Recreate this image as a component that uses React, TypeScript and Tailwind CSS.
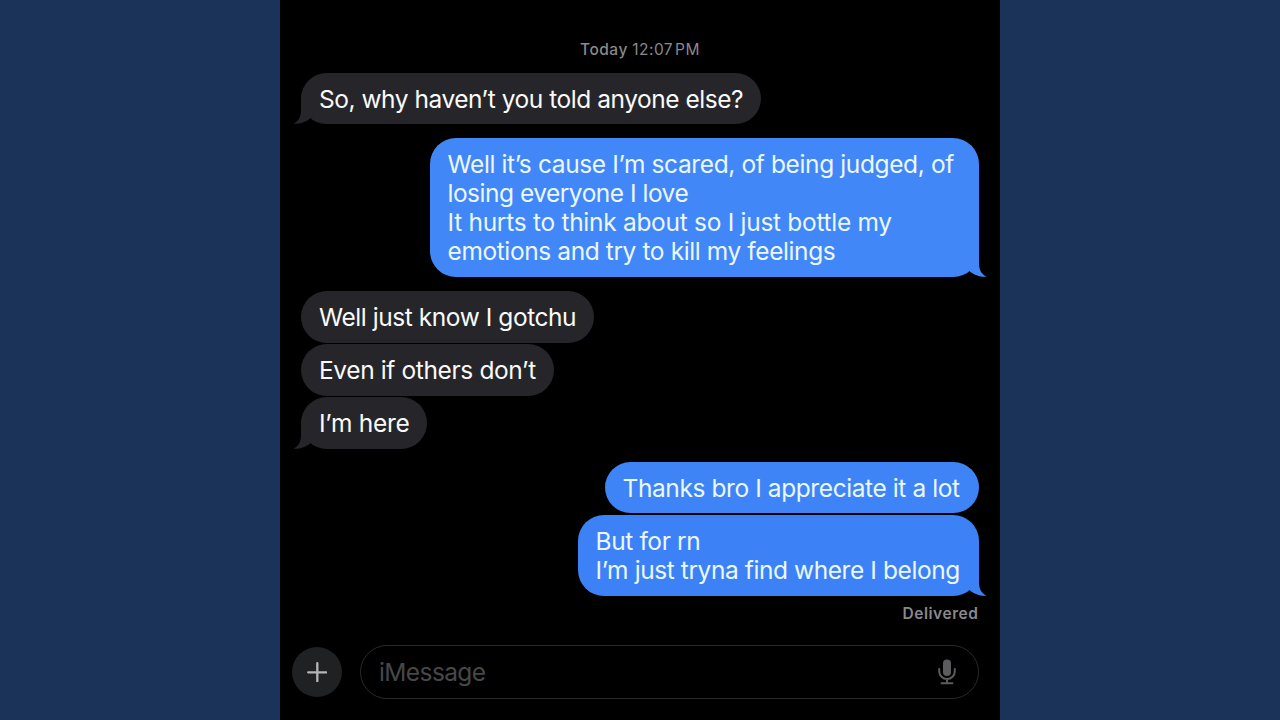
import React from "react";

type Message = {
  id: number;
  lines: { text: string; tracking: string }[];
  fromMe: boolean;
  hasTail: boolean;
  className: string;
};

const messages: Message[] = [
  {
    id: 1,
    lines: [
      {
        text: "So, why haven’t you told anyone else?",
        tracking: "tracking-[-0.47px]",
      },
    ],
    fromMe: false,
    hasTail: true,
    className: "w-[460px] bg-[#26262a]",
  },
  {
    id: 2,
    lines: [
      {
        text: "Well it’s cause I’m scared, of being judged, of",
        tracking: "tracking-[-0.38px]",
      },
      { text: "losing everyone I love", tracking: "tracking-[-0.5px]" },
      {
        text: "It hurts to think about so I just bottle my",
        tracking: "tracking-[-0.29px]",
      },
      {
        text: "emotions and try to kill my feelings",
        tracking: "tracking-[-0.4px]",
      },
    ],
    fromMe: true,
    hasTail: true,
    className: "mt-[13.5px] w-[549px] bg-[#4287f7]",
  },
  {
    id: 3,
    lines: [
      { text: "Well just know I gotchu", tracking: "tracking-[-0.44px]" },
    ],
    fromMe: false,
    hasTail: false,
    className: "mt-[14.3px] w-[293px] bg-[#26262a]",
  },
  {
    id: 4,
    lines: [{ text: "Even if others don’t", tracking: "tracking-[-0.38px]" }],
    fromMe: false,
    hasTail: false,
    className: "mt-[1.5px] w-[253px] bg-[#26262a]",
  },
  {
    id: 5,
    lines: [{ text: "I’m here", tracking: "tracking-[-0.28px]" }],
    fromMe: false,
    hasTail: true,
    className: "mt-[1.5px] w-[126px] bg-[#26262a]",
  },
  {
    id: 6,
    lines: [
      {
        text: "Thanks bro I appreciate it a lot",
        tracking: "tracking-[-0.41px]",
      },
    ],
    fromMe: true,
    hasTail: false,
    className: "mt-[12.95px] w-[374px] bg-[#3e84f7]",
  },
  {
    id: 7,
    lines: [
      { text: "But for rn", tracking: "tracking-[-0.38px]" },
      {
        text: "I’m just tryna find where I belong",
        tracking: "tracking-[-0.42px]",
      },
    ],
    fromMe: true,
    hasTail: true,
    className: "mt-[1.75px] w-[401px] bg-[#3c82f6]",
  },
];

function Tail({ fromMe, last }: { fromMe: boolean; last: boolean }) {
  const side = fromMe ? "-right-2 -scale-x-100" : "-left-2";
  const color = !fromMe
    ? "text-[#26262a]"
    : last
      ? "text-[#3c82f6]"
      : "text-[#4287f7]";
  return (
    <svg
      viewBox="0 0 26 28"
      className={`absolute bottom-0 h-7 w-[26px] ${side} ${color}`}
      fill="currentColor"
    >
      <path d="M8 0V14C8 21 5.5 25.5 0.3 27.7C6.5 28.2 13 26 17.4 22.2L26 10V0Z" />
    </svg>
  );
}

function Bubble({ message, last }: { message: Message; last: boolean }) {
  const { lines, fromMe, hasTail, className } = message;
  return (
    <div
      className={`relative rounded-[26px] px-[18px] pt-[11.9px] pb-[10.6px] text-[24.5px] leading-[29.25px] whitespace-nowrap ${className} ${
        fromMe ? "self-end text-[#eaf8ff]" : "self-start text-[#fafafa]"
      }`}
    >
      {hasTail && <Tail fromMe={fromMe} last={last} />}
      {lines.map((line, id) => (
        <div key={id} className={`relative h-[29.1px] ${line.tracking}`}>
          {line.text}
        </div>
      ))}
    </div>
  );
}

function InputBar() {
  return (
    <div className="mt-[21px] flex items-center pl-3">
      <button className="flex h-[50px] w-[50px] items-center justify-center rounded-full bg-[#202123]">
        <svg
          viewBox="0 0 20 20"
          className="h-5 w-5"
          stroke="#b4b5b6"
          strokeWidth="2.3"
          strokeLinecap="round"
        >
          <path d="M10.3 1.2V19.2M1.2 10.3H19.2" />
        </svg>
      </button>
      <div className="ml-[18px] flex h-[54px] w-[619px] items-center justify-between rounded-full border-[1.5px] border-[#29292b] pr-[22px] pl-[18px]">
        <span className="pt-px text-[24.5px] tracking-[-0.6px] text-[#47474a]">
          iMessage
        </span>
        <svg viewBox="0 0 18 26" className="h-[26px] w-[18px]">
          <rect x="5" y="0.5" width="8" height="16.5" rx="4" fill="#5c5c5e" />
          <path
            d="M1.2 10V12.3A7.8 7.8 0 0 0 16.8 12.3V10M9 20V24M3.6 24.2H14.4"
            fill="none"
            stroke="#5c5c5e"
            strokeWidth="2"
            strokeLinecap="round"
          />
        </svg>
      </div>
    </div>
  );
}

function App() {
  return (
    <div className="flex h-screen justify-center overflow-hidden bg-[#1c3359] font-[Inter,sans-serif]">
      <div className="flex w-[720px] flex-col bg-black">
        <div className="mt-10 flex justify-center text-[15.5px] leading-5 text-[#89898c]">
          <span className="mr-[4.5px] font-medium tracking-[0.5px]">Today</span>
          <span className="tracking-[0.45px]">12:07</span>
          <span className="ml-[2px] tracking-[0.5px]">PM</span>
        </div>
        <div className="mt-[12.75px] flex flex-col pr-[21.5px] pl-[21px]">
          {messages.map((message, index) => (
            <Bubble
              key={message.id}
              message={message}
              last={index === messages.length - 1}
            />
          ))}
          <div className="mt-2 self-end text-[15.5px] leading-5 font-semibold tracking-[0.55px] text-[#89898c]">
            Delivered
          </div>
        </div>
        <InputBar />
      </div>
    </div>
  );
}

export default App;
